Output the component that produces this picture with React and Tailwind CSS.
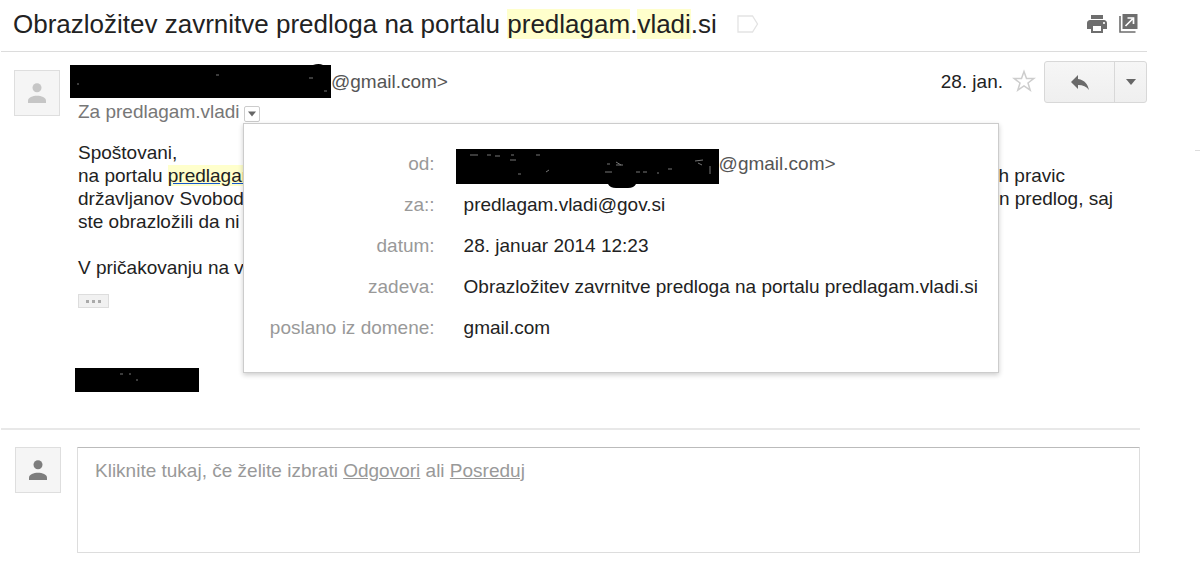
import React, { useState } from 'react';
import { MdPrint, MdReply } from 'react-icons/md';

const Avatar = ({ color }) => (
  <div className="flex h-[46px] w-[46px] shrink-0 items-center justify-center border border-[#dedede] bg-[#f5f5f5]">
    <svg className={color} width="18" height="20" viewBox="0 0 18 20" fill="currentColor">
      <circle cx="9" cy="4.7" r="4.5" />
      <path d="M0 20v-2.2C0 14.6 4.8 12.8 9 12.8s9 1.800 9 5V20z" />
    </svg>
  </div>
);

const Caret = ({ width = 10 }) => (
  <svg width={width} height="6" viewBox="0 0 10 6" fill="#666">
    <path d="M0 0h10L5 6z" />
  </svg>
);

const LabelIcon = () => (
  <svg width="22" height="18" viewBox="0 0 22 18" fill="none" stroke="#e3e3e3" strokeWidth="1.3">
    <path d="M1 1h14.500l5 8-5 8H1z" />
  </svg>
);

const StarIcon = () => (
  <svg width="24" height="24" viewBox="0 0 24 24" fill="none" stroke="#cdcdcd" strokeWidth="1.500">
    <path d="M12 2.500l2.500 7h7.300l-5.800 4.500 2.200 7.200L12 17l-6.200 4.200L8 14 2.200 9.500h7.300z" />
  </svg>
);

const NewWindowIcon = () => (
  <svg width="19" height="19" viewBox="0 0 19 19">
    <path d="M3.500 0H18.500V15H3.500z" fill="#6e6e6e" />
    <path d="M1 2v16h15.500" fill="none" stroke="#6e6e6e" strokeWidth="1.600" />
    <path d="M6.500 12l7-7M8.500 4h6v6" fill="none" stroke="#fff" strokeWidth="1.700" />
  </svg>
);

const Mark = ({ children }) => <span className="bg-[#ffffcc]">{children}</span>;

// values of the details popup, the sender row is drawn apart
const details = [
  { label: 'za::', value: 'predlagam.vladi@gov.si' },
  { label: 'datum:', value: '28. januar 2014 12:23' },
  { label: 'zadeva:', value: 'Obrazložitev zavrnitve predloga na portalu predlagam.vladi.si' },
  { label: 'poslano iz domene:', value: 'gmail.com' },
];

const DetailsPopup = () => (
  <dl className="absolute -left-px top-5 z-10 grid w-[756px] grid-cols-[191px_1fr] gap-x-[29px] border border-[#ccc] bg-white pb-6 pt-[19px] leading-[41px] shadow-[0_2px_5px_rgba(0,0,0,0.2)]">
    <dt className="text-right text-[#999]">od:</dt>
    <dd className="-ml-2 flex h-[41px] items-center text-[#555]">
      <svg className="shrink-0 self-end overflow-visible" width="263" height="35" viewBox="0 0 263 35">
        <path d="M0 0h263v35h-83q-2 4-8 4h-12q-6 0-8-4H0z" fill="#000" />
        <path
          d="M14 6h8M31 6h4M39 7h5M55 6h3M54 11h6M80 6h4M62 25h3M90 23l3-2M151 15h3M160 16h7M149 23h7M160 13l5 3M180 23h4M187 23h4M201 24h2M212 20h4M239 12l8-1M242 14l4 2M254 17v8"
          fill="none"
          stroke="#777"
        />
      </svg>
      <span>@gmail.com&gt;</span>
    </dd>
    {details.map((d) => (
      <React.Fragment key={d.label}>
        <dt className="text-right text-[#999]">{d.label}</dt>
        <dd className="whitespace-nowrap">{d.value}</dd>
      </React.Fragment>
    ))}
  </dl>
);

const App = () => {
  const [show, setShow] = useState(true);

  return (
    <div className="flex bg-white font-['Liberation_Sans',Arial,sans-serif] text-[19px] leading-[23px] text-[#222]">
      <main className="min-w-0 flex-1 pl-px">
        <header className="mr-12 flex h-[52px] items-center border-b border-[#dcdcdc] pb-1 pl-3 pr-[9px]">
          <h1 className="whitespace-nowrap text-[26px] leading-[30px]">
            Obrazložitev zavrnitve predloga na portalu <Mark>predlagam</Mark>.<Mark>vladi</Mark>.si
          </h1>
          <button className="ml-5" aria-label="Oznaka">
            <LabelIcon />
          </button>
          <div className="ml-auto flex items-center gap-[10px]">
            <button aria-label="Natisni">
              <MdPrint size={24} color="#6e6e6e" />
            </button>
            <button aria-label="Novo okno">
              <NewWindowIcon />
            </button>
          </div>
        </header>

        <article className="mr-12 flex items-start gap-[10px] pl-[13px] pt-[9px]">
          <div className="pt-[9px]">
            <Avatar color="text-[#c6c6c6]" />
          </div>
          <div className="min-w-0 flex-1">
            <div className="flex h-[42px] items-center">
              <div className="flex items-center pb-0.5 text-[#555]">
                <svg width="261" height="33" viewBox="0 0 261 33" className="shrink-0 overflow-visible">
                  <path d="M0 0h243q6-2 10 0h8v33H0z" fill="#000" />
                  <path d="M146 10h3M239 13h4M254 26h3M7 19h2" fill="none" stroke="#777" />
                </svg>
                <span>@gmail.com&gt;</span>
              </div>
              <span className="ml-auto pb-0.5">28. jan.</span>
              <button className="ml-[9px] mr-2 pb-0.5" aria-label="Zvezdica">
                <StarIcon />
              </button>
              <div className="flex h-[42px] w-[103px] rounded-[3px] border border-[#d8d8d8] bg-linear-to-b from-[#f6f6f6] to-[#efefef]">
                <button className="flex flex-1 items-center justify-center" aria-label="Odgovori">
                  <MdReply size={24} color="#6a6a6a" />
                </button>
                <button className="flex w-8 items-center justify-center border-l border-[#d8d8d8]" aria-label="Več">
                  <Caret />
                </button>
              </div>
            </div>

            <div className="flex h-[18px] items-center gap-1 pl-2 text-[#777]">
              <span className="pb-0.5">Za predlagam.vladi</span>
              <div className="relative text-[#222]">
                <button
                  onClick={() => setShow(!show)}
                  className="mt-[3px] flex h-4 w-4 items-center justify-center rounded-[2px] border border-[#ccc]"
                  aria-label="Pokaži podrobnosti"
                >
                  <Caret width={8} />
                </button>
                {show && <DetailsPopup />}
              </div>
            </div>

            <div className="mt-5 whitespace-nowrap pl-2">
              <p>Spoštovani,</p>
              <p className="flex justify-between pr-[82px]">
                <span>
                  na portalu <a href="#" className="underline decoration-[#1155cc]"><Mark>predlagam</Mark></a>
                </span>
                <span>h pravic</span>
              </p>
              <p className="flex justify-between pr-[34px]">
                <span>državljanov Svobodn</span>
                <span>en predlog, saj</span>
              </p>
              <p>ste obrazložili da ni v</p>
              <p className="mt-[23px]">V pričakovanju na va</p>
            </div>
            <button
              className="ml-2 mt-[15px] flex h-[14px] w-[31px] items-center justify-center gap-[3px] border border-[#ddd] bg-[#f1f1f1]"
              aria-label="Pokaži obrezano vsebino"
            >
              <i className="h-[3px] w-[3px] bg-[#aaa]" />
              <i className="h-[3px] w-[3px] bg-[#aaa]" />
              <i className="h-[3px] w-[3px] bg-[#aaa]" />
            </button>
            <svg className="ml-[5px] mt-[60px] block" width="124" height="24" viewBox="0 0 124 24">
              <path d="M0 0h124v24H0z" fill="#000" />
              <path d="M45 6h3M54 6h2M61 12h2" fill="none" stroke="#777" />
            </svg>
          </div>
        </article>

        <section className="mr-[55px] mt-9 flex items-start gap-4 border-t-2 border-[#e8e8e8] pl-[14px] pt-[17px]">
          <Avatar color="text-[#7d7d7d]" />
          <div className="h-[106px] flex-1 rounded-[1px] border border-[#ddd] border-t-[#bbb] px-[17px] py-[11px] text-[#999]">
            Kliknite tukaj, če želite izbrati <a href="#" className="underline">Odgovori</a> ali{' '}
            <a href="#" className="underline">Posreduj</a>
          </div>
        </section>
      </main>
      <aside className="w-[5px] shrink-0 pt-[150px]">
        <hr className="border-[#ddd]" />
      </aside>
    </div>
  );
};

export default App;
